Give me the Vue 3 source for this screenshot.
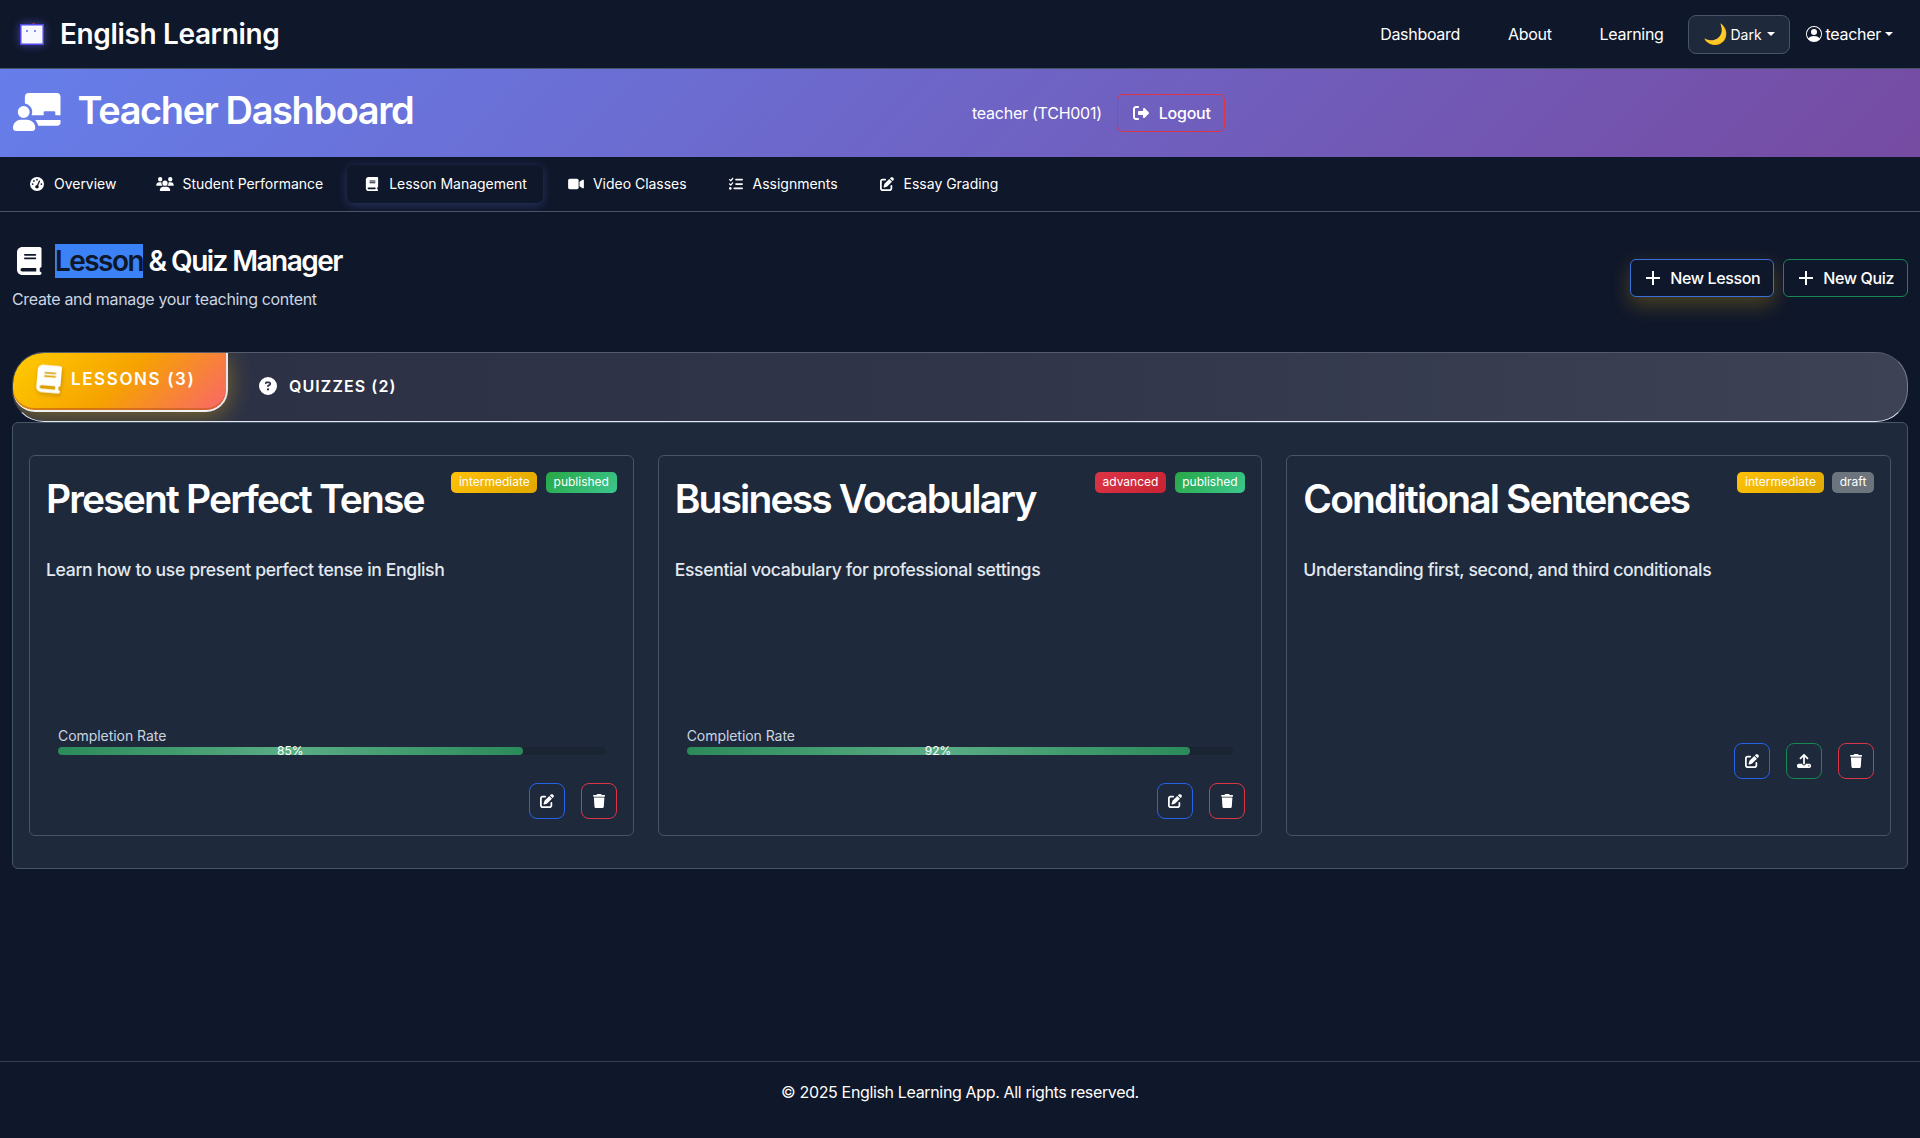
<script setup>
const navLinks = ["Dashboard", "About", "Learning"];

const icons = {
  book: {
    box: "0 0 448 512",
    d: "M96 0C43 0 0 43 0 96V416c0 53 43 96 96 96H384h32c17.700 0 32-14.300 32-32s-14.300-32-32-32V384c17.700 0 32-14.300 32-32V32c0-17.700-14.300-32-32-32H384 96zm0 384H352v64H96c-17.700 0-32-14.300-32-32s14.300-32 32-32zm32-240c0-8.800 7.200-16 16-16H336c8.800 0 16 7.200 16 16s-7.200 16-16 16H144c-8.800 0-16-7.200-16-16zm16 48H336c8.800 0 16 7.200 16 16s-7.200 16-16 16H144c-8.800 0-16-7.200-16-16s7.200-16 16-16z",
  },
  trash: {
    box: "0 0 448 512",
    d: "M135.200 17.700L128 32H32C14.300 32 0 46.300 0 64S14.300 96 32 96H416c17.700 0 32-14.300 32-32s-14.300-32-32-32H320l-7.200-14.300C307.400 6.800 296.300 0 284.200 0H163.800c-12.100 0-23.200 6.800-28.600 17.700zM416 128H32L53.200 467c1.600 25.300 22.600 45 47.900 45H346.900c25.300 0 46.300-19.700 47.900-45L416 128z",
  },
  edit: {
    box: "0 0 512 512",
    d: "M471.600 21.700c-21.900-21.900-57.300-21.900-79.200 0L362.300 51.700l97.900 97.900 30.100-30.100c21.900-21.900 21.900-57.300 0-79.200L471.600 21.700zm-299.200 220c-6.100 6.100-10.800 13.600-13.500 21.900l-29.600 88.800c-2.900 8.600-.6 18.100 5.800 24.600s15.900 8.700 24.600 5.800l88.800-29.600c8.200-2.700 15.700-7.400 21.900-13.500L437.700 172.300 339.700 74.300 172.400 241.700zM96 64C43 64 0 107 0 160V416c0 53 43 96 96 96H352c53 0 96-43 96-96V320c0-17.700-14.300-32-32-32s-32 14.300-32 32v96c0 17.700-14.300 32-32 32H96c-17.700 0-32-14.300-32-32V160c0-17.700 14.300-32 32-32h96c17.700 0 32-14.300 32-32s-14.300-32-32-32H96z",
  },
  logout: {
    box: "0 0 512 512",
    d: "M377.900 105.900L500.700 228.700c7.200 7.200 11.300 17.100 11.300 27.300s-4.100 20.100-11.300 27.300L377.900 406.100c-6.400 6.400-15 9.900-24 9.900c-18.700 0-33.900-15.200-33.900-33.900l0-62.100-128 0c-17.700 0-32-14.300-32-32l0-64c0-17.700 14.300-32 32-32l128 0 0-62.100c0-18.700 15.200-33.900 33.900-33.900c9 0 17.600 3.500 24 9.900zM160 96L96 96c-17.700 0-32 14.300-32 32l0 256c0 17.700 14.300 32 32 32l64 0c17.700 0 32 14.300 32 32s-14.300 32-32 32l-64 0c-53 0-96-43-96-96L0 128C0 75 43 32 96 32l64 0c17.700 0 32 14.300 32 32s-14.300 32-32 32z",
  },
  question: {
    box: "0 0 512 512",
    d: "M256 512A256 256 0 1 0 256 0a256 256 0 1 0 0 512zM169.800 165.300c7.900-22.300 29.100-37.300 52.800-37.300h58.300c34.900 0 63.100 28.300 63.100 63.100c0 22.600-12.100 43.500-31.700 54.800L280 264.400c-.2 13-10.900 23.600-24 23.600c-13.300 0-24-10.700-24-24V250.500c0-8.600 4.600-16.500 12.100-20.800l44.300-25.400c4.700-2.700 7.600-7.700 7.600-13.100c0-8.400-6.800-15.100-15.100-15.100H222.600c-3.400 0-6.400 2.100-7.500 5.300l-.4 1.200c-4.400 12.500-18.200 19-30.600 14.600s-19-18.200-14.600-30.600l.4-1.200zM224 352a32 32 0 1 1 64 0 32 32 0 1 1 -64 0z",
  },
  video: {
    box: "0 0 576 512",
    d: "M0 128C0 92.700 28.700 64 64 64H320c35.300 0 64 28.700 64 64V384c0 35.300-28.700 64-64 64H64c-35.300 0-64-28.700-64-64V128zM559.100 99.800c10.400 5.600 16.900 16.400 16.900 28.200V384c0 11.800-6.500 22.600-16.900 28.200s-23 5-32.900-1.600l-96-64L416 337.100V320 192 174.900l14.200-9.500 96-64c9.800-6.500 22.400-7.200 32.900-1.600z",
  },
  users: {
    box: "0 0 640 512",
    d: "M144 0a80 80 0 1 1 0 160A80 80 0 1 1 144 0zM512 0a80 80 0 1 1 0 160A80 80 0 1 1 512 0zM0 298.700C0 239.800 47.800 192 106.700 192h42.700c15.900 0 31 3.500 44.600 9.700c-1.300 7.200-1.900 14.700-1.900 22.300c0 38.200 16.800 72.500 43.300 96c-.2 0-.4 0-.7 0H21.300C9.600 320 0 310.400 0 298.700zM405.300 320c-.2 0-.4 0-.7 0c26.600-23.500 43.300-57.800 43.300-96c0-7.600-.7-15-1.900-22.300c13.600-6.300 28.700-9.700 44.600-9.700h42.700C592.200 192 640 239.800 640 298.700c0 11.800-9.600 21.300-21.300 21.300H405.300zM224 224a96 96 0 1 1 192 0 96 96 0 1 1 -192 0zM128 485.300C128 411.700 187.700 352 261.300 352H378.700C452.300 352 512 411.700 512 485.300c0 14.700-11.900 26.700-26.700 26.700H154.700c-14.700 0-26.700-11.900-26.700-26.700z",
  },
  gauge: {
    box: "0 0 512 512",
    d: "M0 256a256 256 0 1 1 512 0A256 256 0 1 1 0 256zM288 96a32 32 0 1 0 -64 0 32 32 0 1 0 64 0zM256 416c35.300 0 64-28.700 64-64c0-17.400-6.900-33.100-18.100-44.600L366 161.700c5.300-12.100-.2-26.300-12.300-31.600s-26.300 .2-31.600 12.300L257.900 288c-.6 0-1.300 0-1.900 0c-35.300 0-64 28.700-64 64s28.700 64 64 64zM176 144a32 32 0 1 0 -64 0 32 32 0 1 0 64 0zM96 288a32 32 0 1 0 0-64 32 32 0 1 0 0 64zm352-32a32 32 0 1 0 -64 0 32 32 0 1 0 64 0z",
  },
  tasks: {
    box: "0 0 512 512",
    d: "M152.100 38.200c9.900 8.900 10.700 24 1.800 33.900l-72 80c-4.400 4.900-10.600 7.800-17.200 7.900s-12.900-2.400-17.600-7L7 113C-2.300 103.600-2.300 88.400 7 79s24.600-9.400 33.900 0l22.100 22.100 55.100-61.200c8.900-9.900 24-10.700 33.900-1.800zm0 160c9.900 8.900 10.700 24 1.800 33.900l-72 80c-4.400 4.900-10.600 7.800-17.200 7.900s-12.900-2.400-17.600-7L7 273c-9.400-9.400-9.400-24.600 0-33.900s24.600-9.400 33.900 0l22.100 22.100 55.100-61.200c8.900-9.900 24-10.700 33.900-1.800zM224 96c0-17.700 14.300-32 32-32H480c17.700 0 32 14.300 32 32s-14.300 32-32 32H256c-17.700 0-32-14.300-32-32zm0 160c0-17.700 14.300-32 32-32H480c17.700 0 32 14.300 32 32s-14.300 32-32 32H256c-17.700 0-32-14.300-32-32zM160 416c0-17.700 14.300-32 32-32H480c17.700 0 32 14.300 32 32s-14.300 32-32 32H192c-17.700 0-32-14.300-32-32zM48 368a48 48 0 1 1 0 96 48 48 0 1 1 0-96z",
  },
  teacher: {
    box: "0 0 640 512",
    d: "M208 0H592c26.500 0 48 22 48 50V300H570V262c0-8-7-15-15-15H428c-8 0-15 7-15 15v38H250A115 115 0 0 0 160 142V50C160 22 181 0 208 0zM300 364H640V400c0 22-18 40-40 40H340C332 412 318 386 300 364zM144 176a80 80 0 1 1 0 160a80 80 0 1 1 0-160zM100 360H190C254 360 300 410 300 470c0 23-19 42-42 42H42C19 512 0 493 0 470C0 410 46 360 100 360z",
  },
  upload: {
    box: "0 0 512 512",
    d: "M288 109.300V352c0 17.700-14.300 32-32 32s-32-14.300-32-32V109.300l-73.400 73.400c-12.500 12.500-32.800 12.500-45.300 0s-12.500-32.800 0-45.300l128-128c12.500-12.500 32.800-12.500 45.300 0l128 128c12.500 12.500 12.500 32.800 0 45.300s-32.800 12.500-45.300 0L288 109.300zM64 352H192c0 35.300 28.700 64 64 64s64-28.700 64-64H448c35.300 0 64 28.700 64 64v32c0 35.300-28.700 64-64 64H64c-35.300 0-64-28.700-64-64V416c0-35.300 28.700-64 64-64zM432 456a24 24 0 1 0 0-48 24 24 0 1 0 0 48z",
  },
  user: {
    box: "0 0 16 16",
    d: "M11 6a3 3 0 1 1-6 0 3 3 0 0 1 6 0zM0 8a8 8 0 1 1 16 0A8 8 0 0 1 0 8zm8-7a7 7 0 0 0-5.468 11.37C3.242 11.226 4.805 10 8 10s4.757 1.225 5.468 2.370A7 7 0 0 0 8 1z",
  },
};

const tabs = [
  { label: "Overview", icon: "gauge" },
  { label: "Student Performance", icon: "users" },
  { label: "Lesson Management", icon: "book", active: true },
  { label: "Video Classes", icon: "video" },
  { label: "Assignments", icon: "tasks" },
  { label: "Essay Grading", icon: "edit" },
];

const lessons = [
  {
    title: "Present Perfect Tense",
    text: "Learn how to use present perfect tense in English",
    level: "intermediate",
    status: "published",
    rate: 85,
  },
  {
    title: "Business Vocabulary",
    text: "Essential vocabulary for professional settings",
    level: "advanced",
    status: "published",
    rate: 92,
  },
  {
    title: "Conditional Sentences",
    text: "Understanding first, second, and third conditionals",
    level: "intermediate",
    status: "draft",
    rate: null,
  },
];
</script>

<template>
  <div class="page">
    <header class="navbar">
      <div class="brand">
        <svg class="brand-logo" viewBox="0 0 24 22" width="24" height="22">
          <path d="M11 2l3-2 1 2" fill="none" stroke="#dc3545" stroke-width="0.8" />
          <rect x="0.750" y="1.750" width="22.500" height="19.500" fill="#f8f8ff" stroke="#4f46e5" stroke-width="1.500" />
          <rect x="6" y="7" width="2" height="2" fill="#818cf8" />
          <rect x="14" y="7" width="2" height="2" fill="#818cf8" />
        </svg>
        <span>English Learning</span>
      </div>
      <nav class="nav-right">
        <a v-for="link in navLinks" :key="link" class="nav-link">{{ link }}</a>
        <button class="theme-btn">
          <span class="moon">🌙</span>
          <span>Dark</span>
          <i class="caret"></i>
        </button>
        <div class="user-menu">
          <svg viewBox="0 0 16 16" width="16" height="16" fill="#fff"><path :d="icons.user.d" /></svg>
          <span>teacher</span>
          <i class="caret"></i>
        </div>
      </nav>
    </header>

    <section class="banner">
      <div class="banner-title">
        <svg class="banner-icon" :viewBox="icons.teacher.box" fill="#fff"><path :d="icons.teacher.d" /></svg>
        <h1>Teacher Dashboard</h1>
      </div>
      <div class="banner-user">
        <span>teacher (TCH001)</span>
        <button class="logout-btn">
          <svg :viewBox="icons.logout.box" width="16" height="16" fill="#fff"><path :d="icons.logout.d" /></svg>
          Logout
        </button>
      </div>
    </section>

    <nav class="tabs">
      <a v-for="tab in tabs" :key="tab.label" class="tab" :class="{ active: tab.active }">
        <svg :viewBox="icons[tab.icon].box" width="18" height="14" fill="#fff"><path :d="icons[tab.icon].d" /></svg>
        {{ tab.label }}
      </a>
    </nav>

    <main class="content">
      <div class="heading-row">
        <div>
          <h2 class="heading">
            <svg :viewBox="icons.book.box" width="24.500" height="28" fill="#fff"><path :d="icons.book.d" /></svg>
            <span><span class="selected">Lesson</span> &amp; Quiz Manager</span>
          </h2>
          <p class="sub">Create and manage your teaching content</p>
        </div>
        <div class="heading-actions">
          <button class="new-btn new-lesson"><span class="plus"></span>New Lesson</button>
          <button class="new-btn new-quiz"><span class="plus"></span>New Quiz</button>
        </div>
      </div>

      <div class="pill-bar">
        <div class="pill pill-active">
          <svg :viewBox="icons.book.box" width="24" height="28" fill="#fff" class="pill-book"><path :d="icons.book.d" /></svg>
          LESSONS (3)
        </div>
        <div class="pill">
          <svg :viewBox="icons.question.box" width="18" height="18" fill="#fff"><path :d="icons.question.d" /></svg>
          QUIZZES (2)
        </div>
      </div>

      <div class="panel">
        <article v-for="lesson in lessons" :key="lesson.title" class="card">
          <div class="badges">
            <span class="badge" :class="lesson.level">{{ lesson.level }}</span>
            <span class="badge" :class="lesson.status">{{ lesson.status }}</span>
          </div>
          <h3>{{ lesson.title }}</h3>
          <p class="desc">{{ lesson.text }}</p>
          <div v-if="lesson.rate" class="progress-block">
            <div class="progress-label">Completion Rate</div>
            <div class="track">
              <div class="fill" :style="{ width: lesson.rate + '%' }"><span>{{ lesson.rate }}%</span></div>
            </div>
          </div>
          <div class="actions" :class="{ 'actions-draft': !lesson.rate }">
            <button class="icon-btn blue">
              <svg :viewBox="icons.edit.box" width="14" height="14" fill="#fff"><path :d="icons.edit.d" /></svg>
            </button>
            <button v-if="!lesson.rate" class="icon-btn green">
              <svg :viewBox="icons.upload.box" width="14" height="14" fill="#fff"><path :d="icons.upload.d" /></svg>
            </button>
            <button class="icon-btn red">
              <svg :viewBox="icons.trash.box" width="12.250" height="14" fill="#fff"><path :d="icons.trash.d" /></svg>
            </button>
          </div>
        </article>
      </div>
    </main>

    <footer class="footer">© 2025 English Learning App. All rights reserved.</footer>
  </div>
</template>

<style>
html,
body {
  margin: 0;
  background: #0f172a;
}
</style>

<style scoped>
.page {
  min-height: 1138px;
  display: flex;
  flex-direction: column;
  background: #0f172a;
  color: #fff;
  font-family: Inter, "Liberation Sans", sans-serif;
}
button {
  font-family: inherit;
  color: #fff;
}
.navbar {
  height: 68px;
  box-sizing: content-box;
  border-bottom: 1px solid #475569;
  display: flex;
  align-items: center;
  justify-content: space-between;
  padding: 0 27px 0 20px;
}
.brand {
  display: flex;
  align-items: center;
  gap: 16px;
  font-size: 28px;
  font-weight: 600;
  letter-spacing: -0.36px;
}
.brand-logo {
  filter: drop-shadow(0 0 4px rgba(99, 102, 241, 0.6));
}
.nav-right {
  display: flex;
  align-items: center;
  font-size: 16px;
  letter-spacing: -0.3px;
}
.nav-link {
  padding: 0 24px;
}
.theme-btn {
  width: 102px;
  height: 39px;
  margin-right: 16px;
  background: #1e293b;
  border: 1px solid #475569;
  border-radius: 8px;
  font-size: 14px;
  display: flex;
  align-items: center;
  justify-content: center;
  gap: 3px;
}
.theme-btn .caret {
  margin-left: 2px;
}
.moon {
  font-size: 20px;
  line-height: 1;
}
.caret {
  display: inline-block;
  width: 0;
  height: 0;
  border-top: 4.800px solid #fff;
  border-left: 4.800px solid transparent;
  border-right: 4.800px solid transparent;
}
.user-menu {
  display: flex;
  align-items: center;
  gap: 4px;
}
.banner {
  height: 88px;
  display: flex;
  align-items: center;
  padding: 0 13px;
  background: linear-gradient(135deg, #667eea 0%, #764ba2 100%);
}
.banner-title {
  display: flex;
  align-items: center;
  gap: 17px;
  width: 959px;
}
.banner-icon {
  width: 47.500px;
  height: 38px;
  margin-top: -3px;
}
.banner-title h1 {
  margin: -6px 0 0;
  font-size: 38px;
  font-weight: 600;
  letter-spacing: -1.400px;
}
.banner-user {
  display: flex;
  align-items: center;
  gap: 15px;
  font-size: 16px;
  letter-spacing: -0.25px;
}
.logout-btn {
  height: 38px;
  padding: 0 13px 0 15px;
  background: transparent;
  border: 1px solid #dc3545;
  border-radius: 6px;
  font-size: 16px;
  font-weight: 500;
  letter-spacing: -0.25px;
  display: flex;
  align-items: center;
  gap: 10px;
}
.tabs {
  height: 54px;
  box-sizing: content-box;
  border-bottom: 1px solid #475569;
  display: flex;
  align-items: center;
  padding: 0 12px;
  gap: 8px;
}
.tab {
  box-sizing: border-box;
  height: 38px;
  display: flex;
  align-items: center;
  gap: 8px;
  padding: 0 16px 1px;
  font-size: 14px;
  letter-spacing: -0.02px;
  border-radius: 6px;
}
.tab.active {
  background: #0f172a;
  box-shadow: 0 2px 10px rgba(102, 126, 234, 0.3);
}
.content {
  padding: 32px 12px 0;
  flex: 1;
}
.heading-row {
  display: flex;
  justify-content: space-between;
  align-items: center;
  margin-bottom: 41px;
}
.heading {
  margin: 0 0 9px;
  display: flex;
  align-items: center;
  gap: 13.500px;
  padding-left: 5px;
  font-size: 28px;
  font-weight: 600;
  letter-spacing: -1.550px;
  line-height: 34px;
}
.selected {
  background: #3b82f6;
  color: #0f172a;
}
.sub {
  margin: 0;
  font-size: 16px;
  color: #cbd5e1;
  line-height: 24px;
  letter-spacing: -0.34px;
}
.heading-actions {
  display: flex;
  gap: 9px;
}
.new-btn {
  height: 38px;
  padding: 0 13px 0 15px;
  background: #0f172a;
  border-radius: 6px;
  font-size: 16px;
  font-weight: 500;
  letter-spacing: -0.37px;
  display: flex;
  align-items: center;
  gap: 10px;
}
.new-lesson {
  border: 1px solid #3b6fd8;
  box-shadow: 0 8px 20px rgba(255, 193, 7, 0.25);
}
.new-quiz {
  border: 1px solid #198754;
}
.plus {
  width: 14px;
  height: 14px;
  background:
    linear-gradient(#fff, #fff) center / 100% 2px no-repeat,
    linear-gradient(#fff, #fff) center / 2px 100% no-repeat;
}
.pill-bar {
  box-sizing: border-box;
  height: 70px;
  display: flex;
  align-items: flex-start;
  overflow: hidden;
  background: linear-gradient(90deg, #2b3044, #30354a 50%, #3d4354);
  border-style: solid;
  border-width: 1px;
  border-color: #565b6b #7a7f8c #e2e8f0 #3a3f50;
  border-radius: 32px;
}
.pill {
  display: flex;
  align-items: center;
  gap: 12px;
  height: 66px;
  padding: 0 31px;
  font-size: 16px;
  font-weight: 600;
  letter-spacing: 1.100px;
}
.pill-active {
  box-sizing: border-box;
  width: 215px;
  height: 59px;
  gap: 10px;
  padding: 0 0 6px 24px;
  font-size: 17px;
  letter-spacing: 1.600px;
  background: linear-gradient(135deg, #ffcc00, #f6a200 50%, #f9666b);
  border-right: 2px solid #e6e6e6;
  border-bottom: 2px solid #f1f1f1;
  border-radius: 30px 0 22px 22px;
  box-shadow:
    0 4px 25px rgba(255, 193, 7, 0.4),
    inset 0 -2px 0 rgba(190, 90, 30, 0.6);
}
.pill-book {
  transform: rotate(5deg);
  flex: none;
  filter: drop-shadow(1px 2px 2px rgba(0, 0, 0, 0.2));
}
.panel {
  box-sizing: border-box;
  height: 447px;
  display: grid;
  grid-template-columns: repeat(3, 1fr);
  gap: 24px;
  padding: 32px 16px;
  background: #1e293b;
  border: 1px solid #475569;
  border-radius: 6px;
}
.card {
  position: relative;
  box-sizing: border-box;
  display: flex;
  flex-direction: column;
  padding: 16px;
  background: #1e293b;
  border: 1px solid #475569;
  border-radius: 6px;
}
.badges {
  position: absolute;
  top: 16px;
  right: 16px;
  display: flex;
  gap: 8.500px;
}
.badge {
  font-size: 12px;
  padding: 0 7.700px;
  height: 21px;
  line-height: 20px;
  border-radius: 5px;
  background: #6c757d;
}
.intermediate {
  background: linear-gradient(135deg, #ffc107, #e0a800);
}
.advanced {
  background: linear-gradient(135deg, #dc3545, #c82333);
}
.published {
  background: linear-gradient(135deg, #28a745, #3cc78f);
}
.card h3 {
  margin: 2.500px 0 0;
  font-size: 39px;
  font-weight: 600;
  letter-spacing: -1.850px;
  line-height: 48px;
}
.desc {
  margin: 34.700px 0 0;
  font-size: 17.600px;
  font-weight: 500;
  color: #e2e8f0;
  line-height: 26px;
  letter-spacing: -0.35px;
}
.progress-block {
  margin: 140.500px 12px 0;
}
.progress-label {
  font-size: 14px;
  letter-spacing: -0.05px;
  color: #cbd5e1;
  line-height: 23px;
}
.track {
  height: 8px;
  border-radius: 4px;
  background: #1a2433;
}
.fill {
  height: 8px;
  border-radius: 4px;
  background: linear-gradient(90deg, #2b8a5a, #5aad85 50%, #2b8a5a);
  text-align: center;
  font-size: 12px;
  line-height: 8px;
}
.actions {
  margin-top: 28.500px;
  display: flex;
  justify-content: flex-end;
  gap: 16px;
}
.actions-draft {
  margin-top: 160.200px;
}
.icon-btn {
  width: 36px;
  height: 36px;
  padding: 0;
  background: transparent;
  border-radius: 8px;
  display: flex;
  align-items: center;
  justify-content: center;
}
.blue {
  border: 1px solid #2563eb;
}
.green {
  border: 1px solid #198754;
}
.red {
  border: 1px solid #dc3545;
}
.footer {
  box-sizing: border-box;
  height: 77px;
  border-top: 1px solid #334155;
  display: flex;
  align-items: center;
  justify-content: center;
  font-size: 16px;
  letter-spacing: -0.35px;
  padding-bottom: 16px;
}
</style>
